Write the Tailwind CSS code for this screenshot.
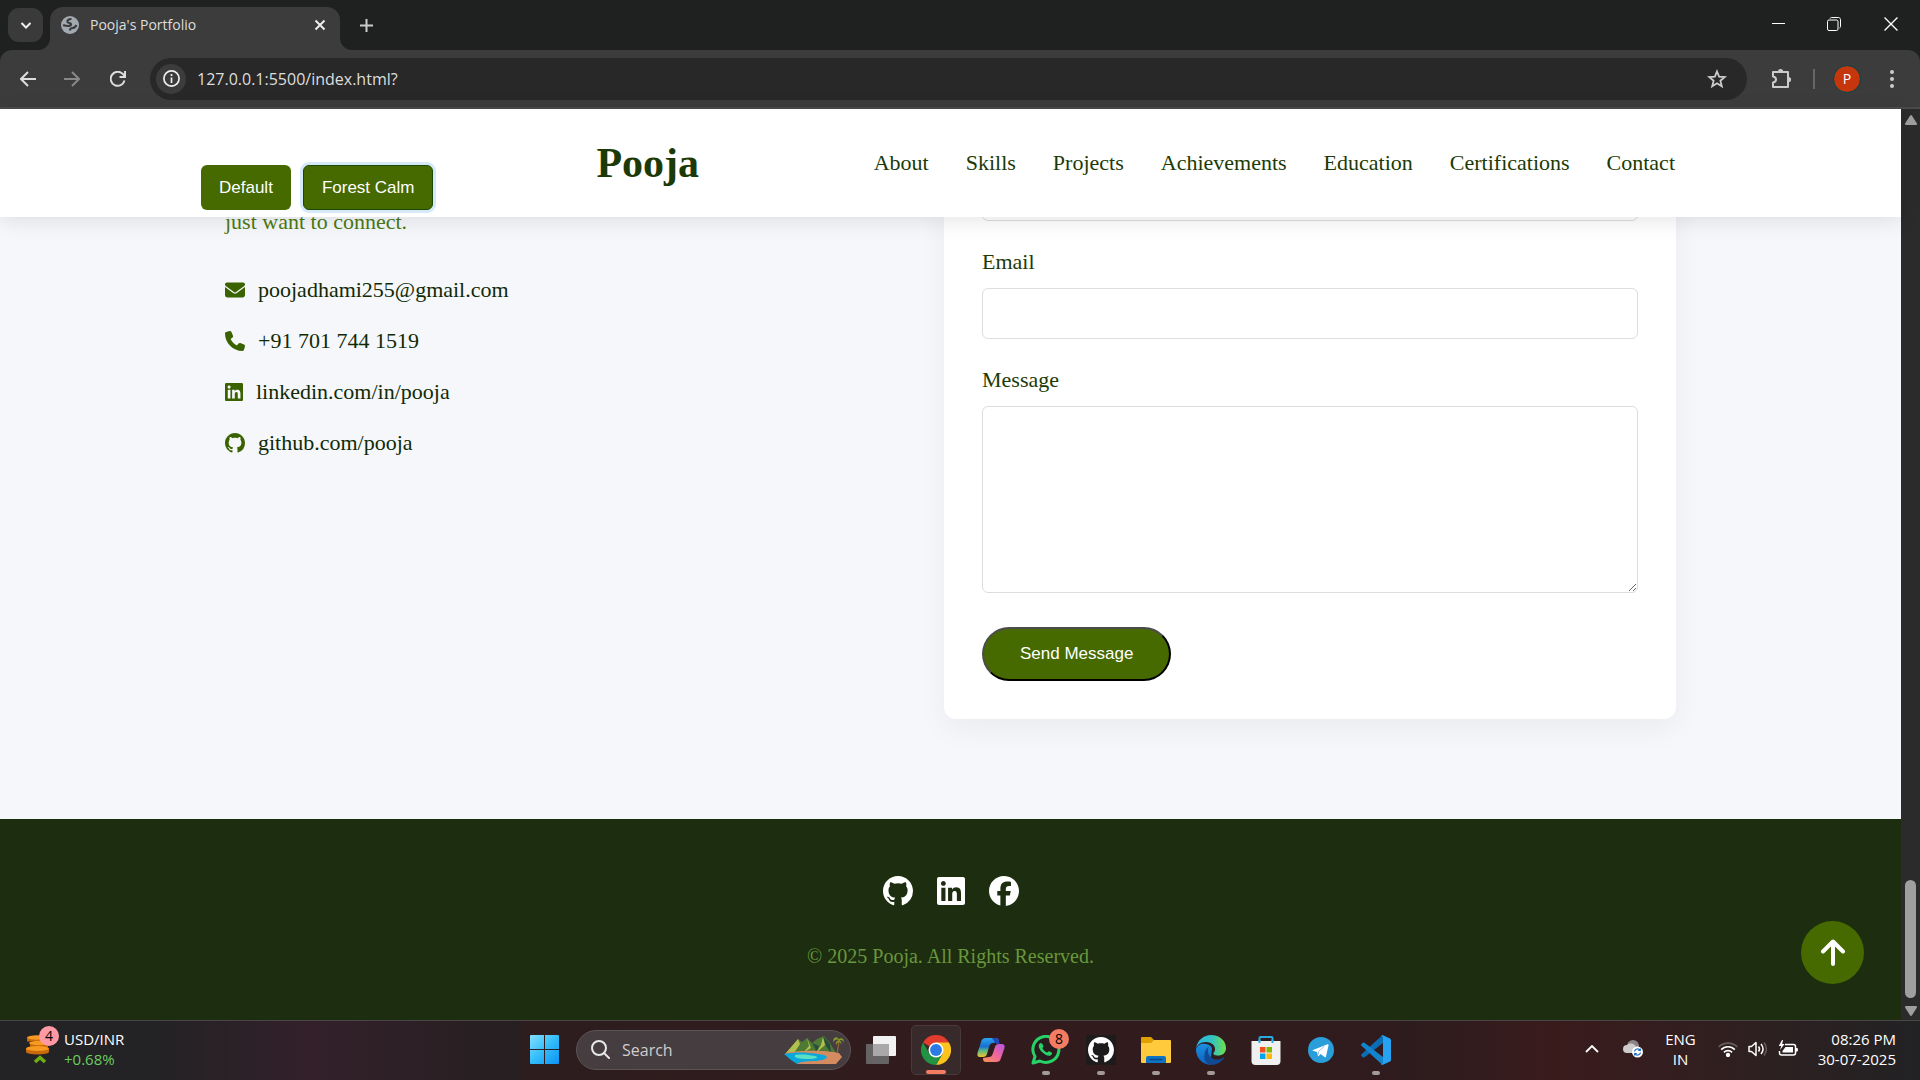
<!DOCTYPE html>
<html lang="en">
<head>
<meta charset="utf-8">
<title>Pooja's Portfolio</title>
<script src="https://cdn.jsdelivr.net/npm/@tailwindcss/browser@4"></script>
</head>
<body class="min-h-screen flex flex-col bg-[#1f2120] font-['Open_Sans','Noto_Sans',sans-serif]">

<svg class="hidden" aria-hidden="true">
  <symbol id="github" viewBox="0 0 16 16"><path d="M8 0C3.58 0 0 3.58 0 8c0 3.54 2.29 6.53 5.47 7.59.4.07.55-.17.55-.38 0-.19-.01-.82-.01-1.49-2.01.37-2.53-.49-2.69-.94-.09-.23-.48-.94-.82-1.13-.28-.15-.68-.52-.01-.53.63-.01 1.08.58 1.23.82.72 1.21 1.87.87 2.33.66.07-.52.28-.87.51-1.07-1.78-.2-3.64-.89-3.64-3.95 0-.87.31-1.59.82-2.15-.08-.2-.36-1.02.08-2.12 0 0 .67-.21 2.2.82.64-.18 1.32-.27 2-.27s1.36.09 2 .27c1.53-1.04 2.2-.82 2.2-.82.44 1.1.16 1.92.08 2.12.51.56.82 1.27.82 2.15 0 3.07-1.87 3.75-3.65 3.95.29.25.54.73.54 1.48 0 1.07-.01 1.93-.01 2.2 0 .21.15.46.55.38A8.01 8.01 0 0 0 16 8c0-4.42-3.58-8-8-8z"/></symbol>
  <symbol id="linkedin" viewBox="0 32 448 448"><path d="M416 32H31.9C14.3 32 0 46.5 0 64.3v383.4C0 465.5 14.3 480 31.9 480H416c17.6 0 32-14.5 32-32.3V64.3c0-17.8-14.4-32.3-32-32.3zM135.4 416H69V202.2h66.5V416zm-33.2-243c-21.3 0-38.5-17.3-38.5-38.5S80.9 96 102.2 96c21.2 0 38.5 17.3 38.5 38.5 0 21.3-17.2 38.5-38.5 38.5zm282.1 243h-66.4V312c0-24.8-.5-56.7-34.5-56.7-34.6 0-39.9 27-39.9 54.9V416h-66.4V202.2h63.7v29.2h.9c8.9-16.8 30.6-34.5 62.9-34.5 67.2 0 79.7 44.3 79.7 101.9V416z"/></symbol>
</svg>

<!-- Tab strip -->
<div class="h-[50px] flex items-start text-white">
  <button aria-label="Search tabs" class="mt-2 ml-2 w-[35px] h-[34px] rounded-[11px] bg-[#3a3a3a] flex items-center justify-center">
    <svg class="size-3" viewBox="0 0 12 12" fill="none" stroke="#eee" stroke-width="2"><path d="M1.5 4 6 8.5 10.500 4"/></svg>
  </button>
  <div class="relative mt-[7px] ml-[7px] w-[290px] h-[43px] rounded-t-[13px] bg-[#3c3c3c] flex items-center pl-[11px] pr-[10px]">
    <svg class="absolute bottom-0 -left-3 size-3" viewBox="0 0 12 12" fill="#3c3c3c"><path d="M12 0v12H0A12 12 0 0 0 12 0z"/></svg>
    <svg class="absolute bottom-0 -right-3 size-3" viewBox="0 0 12 12" fill="#3c3c3c"><path d="M0 0v12h12A12 12 0 0 1 0 0z"/></svg>
    <svg class="size-[18px] -mt-2" viewBox="0 0 18 18"><circle cx="9" cy="9" r="9" fill="#a3a9b1"/><path d="M10.500 3C7.500 3 6 4.500 6.500 6s3 .5 3.500 2-1.500 2-3 2S4 9 2 9.500M9 14.500c0-2 .5-2.500 2.500-2.500s3-1 4-3" fill="none" stroke="#3c3c3c" stroke-width="2.200"/></svg>
    <span class="ml-[11px] -mt-2 text-sm text-[#dedede]">Pooja's Portfolio</span>
    <button aria-label="Close tab" class="ml-auto -mt-2 size-5 flex items-center justify-center"><svg class="size-3" viewBox="0 0 12 12" stroke="#eee" stroke-width="2"><path d="m1.500 1.500 9 9m0-9-9 9"/></svg></button>
  </div>
  <button aria-label="New tab" class="ml-4 mt-[15px] size-5 flex items-center justify-center"><svg class="size-[13px]" viewBox="0 0 13 13" stroke="#ccc" stroke-width="2"><path d="M6.500 0v13M0 6.500h13"/></svg></button>
  <div class="ml-auto flex h-12 items-center">
    <button aria-label="Minimize" class="w-14 flex justify-center"><svg class="size-[13px]" viewBox="0 0 13 13" stroke="#fff"><path d="M0 5.500h13"/></svg></button>
    <button aria-label="Restore" class="w-14 flex justify-center"><svg class="size-[14px]" viewBox="0 0 14 14" fill="none" stroke="#fff"><rect x=".5" y="3" width="10.500" height="10.500" rx="1.500"/><path d="M3 1.500c.3-.7.8-1 1.500-1h7c1 0 2 1 2 2v7c0 .7-.3 1.200-1 1.500"/></svg></button>
    <button aria-label="Close" class="w-[58px] flex justify-center"><svg class="size-[14px]" viewBox="0 0 13 13" stroke="#fff" stroke-width="1.200"><path d="m.5.5 12 12m0-12-12 12"/></svg></button>
  </div>
</div>

<!-- Address bar -->
<div class="h-[59px] rounded-t-xl bg-[#3c3c3c] border-b-2 border-[#4b4b4b] flex items-center pl-[6px] pr-2">
  <button aria-label="Back" class="w-11 flex justify-center"><svg class="size-4" viewBox="0 0 16 16" fill="none" stroke="#ddd" stroke-width="2"><path d="M16 8H1.500M8 1 1 8l7 7"/></svg></button>
  <button aria-label="Forward" class="w-11 flex justify-center"><svg class="size-4" viewBox="0 0 16 16" fill="none" stroke="#888" stroke-width="2"><path d="M0 8h14.500M8 1l7 7-7 7"/></svg></button>
  <button aria-label="Reload" class="w-12 flex justify-center"><svg class="size-4" viewBox="0 0 16 16" fill="none" stroke="#ddd" stroke-width="2"><path d="M14.500 9.500A7 7 0 1 1 13 3.200L15 5.500M15 0v6H9.500"/></svg></button>
  <div class="ml-2 h-[42px] flex-1 rounded-full bg-[#282828] flex items-center pl-[6px] pr-5">
    <button aria-label="Site information" class="size-[30px] rounded-full bg-[#3c3c3c] flex items-center justify-center"><svg class="size-[17px]" viewBox="0 0 17 17" fill="none" stroke="#eee" stroke-width="1.700"><circle cx="8.500" cy="8.500" r="7.600"/><path d="M8.500 7.500V13M8.500 4v2"/></svg></button>
    <input aria-label="Address" value="127.0.0.1:5500/index.html?" class="ml-[11px] flex-1 bg-transparent text-base text-[#dedede] outline-none">
    <button aria-label="Bookmark"><svg class="size-5" viewBox="0 0 20 20" fill="none" stroke="#ccc" stroke-width="1.800"><path d="m10 2.500 2.100 5.200 5.600.4-4.300 3.600 1.400 5.500-4.800-3-4.800 3 1.400-5.500-4.300-3.600 5.600-.4z"/></svg></button>
  </div>
  <button aria-label="Extensions" class="ml-3 w-11 flex justify-center"><svg class="size-[22px]" viewBox="0 0 22 22"><path d="M3 4h15v15H3v-4.500c4-.5 4-5.500 0-6z" fill="none" stroke="#ccc" stroke-width="2" stroke-linejoin="round"/><path d="M8 3.500a2.600 2.600 0 0 1 5.200 0zM18.500 9a2.600 2.600 0 0 1 0 5.200z" fill="#ccc"/></svg></button>
  <span class="ml-[10px] w-[2px] h-5 bg-[#666]"></span>
  <button class="ml-[19px] size-[26px] rounded-full bg-[#c5360c] outline outline-[#144] text-sm text-white flex items-center justify-center">P</button>
  <button aria-label="Menu" class="ml-3 w-10 flex justify-center"><svg class="w-1 h-[18px]" viewBox="0 0 4 18" fill="#ccc"><circle cx="2" cy="2" r="2"/><circle cx="2" cy="9" r="2"/><circle cx="2" cy="16" r="2"/></svg></button>
</div>

<!-- Page -->
<div class="flex flex-1">
  <div class="relative flex flex-1 flex-col bg-[#f5f7fb] font-[Georgia,'Liberation_Serif',serif] text-[22px] leading-8 text-[#1c3a06]">
    <header class="relative z-10 flex h-[108px] items-center bg-white pl-[201px] pr-[226px] shadow-[0_4px_20px_rgba(0,0,0,0.1)]">
      <div class="flex gap-3 self-end pb-[7px] font-['Liberation_Sans',Arial,sans-serif] text-[17px] text-white">
        <button class="h-[45px] rounded-[6px] bg-[#466900] px-[18px]">Default</button>
        <button class="h-[45px] rounded-[6px] bg-[#466900] border border-[#1c4a06] px-[18px] ring-3 ring-[#d6e9f8]">Forest Calm</button>
      </div>
      <a href="#" class="ml-[163px] text-[42px] font-bold">Pooja</a>
      <nav class="ml-auto flex gap-[37px]">
        <a href="#about">About</a><a href="#skills">Skills</a><a href="#projects">Projects</a><a href="#achievements">Achievements</a><a href="#education">Education</a><a href="#certifications">Certifications</a><a href="#contact">Contact</a>
      </nav>
    </header>

    <main class="grid flex-1 grid-cols-[719fr_732fr] overflow-hidden px-[225px] pb-[100px]">
      <div>
        <p class="-mt-[11px] text-[#4a7a12]">just want to connect.</p>
        <ul class="mt-9 flex flex-col gap-[19px] text-[#102a04]">
          <li class="flex items-center gap-[13px]"><svg class="size-5 fill-[#3a6300]" viewBox="0 0 512 512"><path d="M48 64C21.500 64 0 85.500 0 112c0 15.100 7.100 29.300 19.200 38.400L236.800 313.600c11.400 8.500 27 8.500 38.400 0L492.800 150.400c12.100-9.100 19.200-23.300 19.200-38.400 0-26.500-21.500-48-48-48H48zM0 176v208c0 35.300 28.700 64 64 64h384c35.300 0 64-28.700 64-64V176L294.400 339.200c-22.800 17.100-54 17.100-76.800 0L0 176z"/></svg><a href="mailto:poojadhami255@gmail.com">poojadhami255@gmail.com</a></li>
          <li class="flex items-center gap-[13px]"><svg class="size-5 fill-[#3a6300]" viewBox="0 0 512 512"><path d="M164.900 24.600c-7.700-18.600-28-28.500-47.400-23.200l-88 24C12.100 30.200 0 46 0 64c0 247.400 200.600 448 448 448 18 0 33.800-12.100 38.600-29.500l24-88c5.300-19.400-4.600-39.700-23.200-47.400l-96-40c-16.300-6.800-35.200-2.100-46.300 11.600L304.700 368C234.300 334.700 177.300 277.700 144 207.300l49.300-40.300c13.700-11.200 18.400-30 11.600-46.300l-40-96z"/></svg><a href="tel:+917017441519">+91 701 744 1519</a></li>
          <li class="flex items-center gap-[13px]"><svg class="size-[18px] fill-[#3a6300]"><use href="#linkedin"/></svg><a href="#linkedin-profile">linkedin.com/in/pooja</a></li>
          <li class="flex items-center gap-[13px]"><svg class="size-5 fill-[#3a6300]"><use href="#github"/></svg><a href="#github-profile">github.com/pooja</a></li>
        </ul>
      </div>
      <form class="-mt-[85px] self-start rounded-xl bg-white p-[38px] shadow-[0_10px_30px_rgba(0,0,0,0.05)]">
        <input aria-label="Name" class="block h-[51px] w-full rounded-[6px] border border-[#ddd] px-4">
        <label for="email" class="mt-[25px] block">Email</label>
        <input id="email" type="email" class="mt-[10px] block h-[51px] w-full rounded-[6px] border border-[#ddd] px-4">
        <label for="message" class="mt-[25px] block">Message</label>
        <textarea id="message" class="mt-[10px] block h-[187px] w-full resize rounded-[6px] border border-[#ddd] px-4"></textarea>
        <button type="button" class="mt-[34px] block h-[54px] rounded-full border-2 border-t-[#4c4c4c] border-l-[#4c4c4c] border-r-black border-b-black bg-[#466900] px-9 font-['Liberation_Sans',Arial,sans-serif] text-[17px] text-white">Send Message</button>
      </form>
    </main>

    <footer class="bg-[#1c2d10] pt-14 pb-12 text-center">
      <div class="flex h-8 items-center justify-center gap-6 fill-white">
        <a href="#github-profile" aria-label="GitHub"><svg class="size-[30px]"><use href="#github"/></svg></a>
        <a href="#linkedin-profile" aria-label="LinkedIn"><svg class="size-7"><use href="#linkedin"/></svg></a>
        <a href="#facebook" aria-label="Facebook"><svg class="size-[30px]" viewBox="0 0 512 512"><path d="M512 256C512 114.600 397.400 0 256 0S0 114.600 0 256C0 376 82.700 476.800 194.200 504.500V334.200H141.400V256h52.800V222.300c0-87.100 39.400-127.500 125-127.500 16.200 0 44.200 3.200 55.700 6.400V172c-6-.6-16.500-1-29.600-1-42 0-58.200 15.900-58.200 57.200V256h83.600l-14.400 78.200H287V510.100C413.800 494.800 512 386.900 512 256z"/></svg></a>
      </div>
      <p class="mt-[33px] text-xl leading-8 text-[#6a963c]">© 2025 Pooja. All Rights Reserved.</p>
    </footer>
    <button aria-label="Back to top" class="absolute right-[37px] bottom-9 size-[63px] rounded-full bg-[#466900] flex items-center justify-center">
      <svg class="size-7" viewBox="0 0 28 28" fill="none" stroke="#fff" stroke-width="4" stroke-linecap="round" stroke-linejoin="round"><path d="M14 25V3M4 12.500 14 2.500l10 10"/></svg>
    </button>
  </div>
  <!-- Scrollbar -->
  <div class="flex w-[19px] flex-col items-center bg-[#2b2b2b] pt-[6px] pb-1">
    <svg class="w-3 h-[10px]" viewBox="0 0 12 10" fill="#9f9f9f"><path d="M5 .8a1.200 1.200 0 0 1 2 0l4.800 7.500c.4.800 0 1.700-.9 1.700H1.100C.2 10-.2 9.100.2 8.300z"/></svg>
    <div class="mt-auto mb-2 h-[118px] w-[11px] rounded-full bg-[#9f9f9f]"></div>
    <svg class="w-3 h-[10px] rotate-180" viewBox="0 0 12 10" fill="#9f9f9f"><path d="M5 .8a1.200 1.200 0 0 1 2 0l4.800 7.500c.4.800 0 1.700-.9 1.700H1.100C.2 10-.2 9.100.2 8.300z"/></svg>
  </div>
</div>

<!-- Taskbar -->
<div class="grid h-[60px] grid-cols-[1fr_auto_1fr] items-center border-t border-[#4a4547] bg-linear-to-r from-[#261f21] via-[#321b1d] to-[#2c1c1e] text-[15px] leading-5 text-white">
  <div class="flex h-full items-center bg-linear-to-r from-[#232225] from-30% via-[#33202a] via-60% to-[#261f21] pl-[26px] pb-1">
    <div class="relative">
      <svg class="w-[26px] h-7" viewBox="0 0 26 28"><g fill="#c8690a"><path d="M1 2.500h20v4H1zM4 8h18v4H4zM0 13.500h23v3.500H0z"/><ellipse cx="11.500" cy="17" rx="11.500" ry="2.500"/><ellipse cx="13" cy="12" rx="9" ry="2"/></g><g fill="#f79a22"><ellipse cx="11" cy="2.500" rx="10" ry="2.200"/><ellipse cx="13" cy="8" rx="10" ry="2.200"/><ellipse cx="11.500" cy="13.500" rx="11.500" ry="2.500"/></g><path d="m9 27 5-4.500 5 4.500" fill="none" stroke="#6fae10" stroke-width="3.500"/></svg>
      <span class="absolute -top-[9px] left-[13px] flex size-5 items-center justify-center rounded-full bg-[#ff99a4] text-sm text-black">4</span>
    </div>
    <div class="ml-3">
      <div>USD/INR</div>
      <div class="text-[#6ccb5f]">+0.68%</div>
    </div>
  </div>

  <div class="flex items-center gap-[5px] pb-[2px]">
    <button aria-label="Start" class="w-[50px] flex justify-center">
      <svg class="size-[29px]" viewBox="0 0 29 29"><defs><linearGradient id="w" x1="0" y1="0" x2="1" y2="1"><stop stop-color="#84e0ff"/><stop offset=".5" stop-color="#33bdfa"/><stop offset="1" stop-color="#0c93f5"/></linearGradient></defs><path fill="url(#w)" d="M0 1a1 1 0 0 1 1-1h13v14H0zM15 0h13a1 1 0 0 1 1 1v13H15zM0 15h14v14H1a1 1 0 0 1-1-1zM15 15h14v13a1 1 0 0 1-1 1H15z"/></svg>
    </button>
    <label class="ml-[2px] flex h-10 w-[275px] items-center rounded-full border border-[#5c5457] bg-[#453d40] pl-[14px] pr-[6px]">
      <svg class="size-[19px]" viewBox="0 0 19 19" fill="none" stroke="#e8e8e8" stroke-width="2" stroke-linecap="round"><circle cx="8" cy="8" r="7"/><path d="m13 13 5 5"/></svg>
      <input aria-label="Search" placeholder="Search" class="ml-3 min-w-0 flex-1 bg-transparent text-base placeholder-[#d0cccd] outline-none">
      <svg class="w-[60px] h-[30px]" viewBox="0 0 60 30"><path d="M2 18 14 4l4 3 5-4 5 5 5-4 7-3 6 7 6 10z" fill="#4e7a35"/><path d="m2 18 12-14 2 5-6 9zM23 3l2 8-6 7 8-5zM39 2l-2 8-5 8 9-8z" fill="#b3bf4f"/><path d="m39 1 3 10 5 7-1-9zM28 8l3 5 1 5 3-7z" fill="#284d3c"/><path d="M1 18c14-3 40-3 54 0l3 4-6 7H14L6 23z" fill="#d48b5f"/><path d="M0 19c12-2 20-2 34 0 10 1 12 4 4 6-7 2-20 0-25 4L7 25z" fill="#0aa6dc"/><path d="M11 20c8-1 14 0 20 1 5 1 1 3-7 3s-15-1-13-4z" fill="#5be0c4"/><path d="M53 18c1-5 2-8 2-14" stroke="#8c6239" stroke-width="1.500" fill="none"/><path d="M55 4c-4-4-6 0-6 3 2-2 3-3 6-2 3 0 4 0 5 3 0-4-2-6-5-4zm0 1c-3 1-4 3-3 5 1-2 2-3 3-3s2 1 2 3c1-3 0-4-2-5z" fill="#8a9a2a"/></svg>
    </label>
    <button aria-label="Task view" class="w-[50px] flex justify-center"><svg class="size-[30px]" viewBox="0 0 30 30"><rect y="9" width="23" height="20" rx="1" fill="#666364"/><rect x="7" y="1" width="23" height="20" rx="1" fill="#f2f2f2"/><path d="M7 9h16v12H8a1 1 0 0 1-1-1z" fill="#aaa8a8"/></svg></button>
    <button aria-label="Chrome" class="relative size-[50px] rounded-[5px] border border-[#483a3c] bg-[#38292b] flex items-center justify-center">
      <svg class="size-[30px]" viewBox="0 0 48 48"><path d="M24 24 3.200 12A24 24 0 0 1 44.800 12z" fill="#e33b2e"/><path d="M24 12h20.800A24 24 0 0 1 24 48l10.400-18z" fill="#fcc31e"/><path d="M13.600 30 3.200 12A24 24 0 0 0 24 48l10.400-18z" fill="#229342"/><circle cx="24" cy="24" r="12" fill="#fff"/><circle cx="24" cy="24" r="9.500" fill="#2c7be5"/></svg>
      <span class="absolute bottom-0 left-[14px] h-1 w-5 rounded-full bg-[#f47c62]"></span>
    </button>
    <button aria-label="Copilot" class="w-[50px] flex justify-center"><svg class="size-7" viewBox="0 0 28 28"><defs><linearGradient id="c1" x1="0" y1="0" x2="0" y2="1"><stop stop-color="#2aa5f2"/><stop offset=".45" stop-color="#1a6fd0"/><stop offset=".65" stop-color="#4fb78a"/><stop offset="1" stop-color="#f2c62e"/></linearGradient><linearGradient id="c2" x1="1" y1="0" x2="0" y2="1"><stop stop-color="#b455e8"/><stop offset=".5" stop-color="#f0669a"/><stop offset="1" stop-color="#fc9550"/></linearGradient></defs><path d="M9 2h10c2 0 3 2 3 4l-6 1c-2 0-3 1-4 4l-2 7c-.5 2-2 3-4 3H3c-2 0-3-1-2.500-4L4 6c1-3 2-4 5-4z" fill="url(#c1)"/><path d="M19 26H9c-2 0-3-1-3-4l6-1c2 0 3-1 4-4l2-6c.5-2 2-3 4-3h3c2 0 3 1 2.500 4L24 22c-1 3-2 4-5 4z" fill="url(#c2)"/><path d="M15 2h4c2 0 3 1 3.500 6H21c-2 0-3-1-4-3z" fill="#2347b8"/></svg></button>
    <button aria-label="WhatsApp" class="relative h-[50px] w-[50px] flex items-center justify-center">
      <svg class="size-[30px]" viewBox="0 0 30 30"><path d="M2 28 4 21.500A13 13 0 1 1 9 26z" fill="#2a1c1e" stroke="#25d366" stroke-width="3" stroke-linejoin="round"/><path d="M11 8.500c-.6-1-2-.7-2.700.4-1.500 2.600.6 6 3 8.400s6.200 4.500 8.500 3c1.200-.8 1.800-2 .8-2.700l-2.500-1.400c-.8-.3-1.500 1.400-2.200 1.200-1.800-.6-3.700-2.500-4.400-4.200-.2-.7 1.200-1.300 1-2.200z" fill="#25d366"/></svg>
      <span class="absolute top-1 right-[2px] flex size-5 items-center justify-center rounded-full bg-[#f47c62] text-sm text-black">8</span>
      <span class="absolute bottom-0 left-[21px] h-1 w-2 rounded-full bg-[#a39a9c]"></span>
    </button>
    <button aria-label="GitHub" class="relative h-[50px] w-[50px] flex items-center justify-center">
      <span class="flex size-[30px] items-center justify-center bg-[#1d1b1c]"><svg class="size-[26px] fill-white"><use href="#github"/></svg></span>
      <span class="absolute bottom-0 left-[21px] h-1 w-2 rounded-full bg-[#a39a9c]"></span>
    </button>
    <button aria-label="File Explorer" class="relative h-[50px] w-[50px] flex items-center justify-center">
      <svg class="size-[30px]" viewBox="0 0 30 30"><path d="M0 3a1 1 0 0 1 1-1h9l3 3h15v3H0z" fill="#e0a000"/><path d="M0 8h10l3-3h16a1 1 0 0 1 1 1v21a1 1 0 0 1-1 1H1a1 1 0 0 1-1-1z" fill="#ffcb3d"/><path d="M5 28v-5a2 2 0 0 1 2-2h16a2 2 0 0 1 2 2v5z" fill="#0f72c4"/><path d="M8.500 24.500h13" stroke="#0b4a86" stroke-width="1.500"/></svg>
      <span class="absolute bottom-0 left-[21px] h-1 w-2 rounded-full bg-[#a39a9c]"></span>
    </button>
    <button aria-label="Edge" class="relative h-[50px] w-[50px] flex items-center justify-center">
      <svg class="size-[30px]" viewBox="0 0 30 30"><defs><linearGradient id="e1"><stop stop-color="#2bb4e8"/><stop offset=".55" stop-color="#33c3c0"/><stop offset="1" stop-color="#6fe04a"/></linearGradient><linearGradient id="e2" x1="0" y1="0" x2="0" y2="1"><stop stop-color="#1c8fe0"/><stop offset="1" stop-color="#0b63c0"/></linearGradient></defs><path d="M0 14c2-5 6-6 10-5 4 .8 6 3 6 5L14 29.900A15 15 0 0 1 0 14z" fill="url(#e2)"/><path d="M13 11.500c-3.500 6 1 13 8 13 3 0 5-1 6.500-2 .5-.3.800.3.500.8C25 27.500 20 30 15 30 9.500 29 7.500 24 8.500 19c.5-3.500 2-6 4.500-7.500z" fill="#124a92"/><path d="M0 14C1 5 8 0 15 0c9 0 15 6 15 13 0 5-3.500 7.500-8 7.500-4 0-5-1.500-4.500-2.500 1-1.500 1.500-2 1.500-4 0-4-4-7-9-7-6 0-9 3-10 7z" fill="url(#e1)"/></svg>
      <span class="absolute bottom-0 left-[21px] h-1 w-2 rounded-full bg-[#a39a9c]"></span>
    </button>
    <button aria-label="Microsoft Store" class="w-[50px] flex justify-center"><svg class="size-[30px]" viewBox="0 0 30 30"><path d="M8.500 7V3a1 1 0 0 1 1-1h11a1 1 0 0 1 1 1v4" fill="none" stroke="#29abe2" stroke-width="2"/><path d="M.5 6h29v20a4 4 0 0 1-4 4h-21a4 4 0 0 1-4-4z" fill="#f0f0f0"/><path d="M9 12h5.500v5.500H9z" fill="#f25022"/><path d="M15.500 12H21v5.500h-5.500z" fill="#7fba00"/><path d="M9 18.500h5.500V24H9z" fill="#00a4ef"/><path d="M15.500 18.500H21V24h-5.500z" fill="#ffb900"/><path d="M8.500 5v3m13-3v3" stroke="#29abe2" stroke-width="2"/></svg></button>
    <button aria-label="Telegram" class="w-[50px] flex justify-center"><svg class="size-[26px]" viewBox="0 0 26 26"><circle cx="13" cy="13" r="13" fill="#2a9ddb"/><path d="M5 13 19.500 7.200c.7-.2 1.200.2 1 1.200L18 19.500c-.2.900-.8 1-1.500.6L12.700 17l-2 2c-.4.300-.7.200-.8-.3L9 15l-4-1.200c-.6-.2-.6-.5 0-.8z" fill="#fff"/><path d="m10.200 18 .4-3.500 6-5.500" stroke="#9cc8e4" fill="none"/></svg></button>
    <button aria-label="Visual Studio Code" class="relative h-[50px] w-[50px] flex items-center justify-center">
      <svg class="size-[30px]" viewBox="0 0 30 30"><path d="M22 8 3.500 22.200a1.500 1.500 0 0 1-1.800 0L.5 21c-.6-.6-.6-1.300 0-1.800L21 .5 24 3z" fill="#0b6db5"/><path d="M22 22 3.500 7.800a1.500 1.500 0 0 0-1.800 0L.5 9c-.6.6-.6 1.300 0 1.800L21 29.500l3-2.500z" fill="#1283cc"/><path d="m22 .3 7 3.200c.6.300 1 .9 1 1.600v19.800c0 .7-.4 1.300-1 1.600l-7 3.200c-.8.300-1.500 0-2-.5l2-1.200V2L20 .8c.5-.5 1.200-.8 2-.5z" fill="#27a1f2"/></svg>
      <span class="absolute bottom-0 left-[21px] h-1 w-2 rounded-full bg-[#a39a9c]"></span>
    </button>
  </div>

  <div class="flex h-full items-center justify-end bg-linear-to-r from-[#2c1c1e] via-[#3a1b1c] via-30% to-[#222224] pr-6 pb-1">
    <button aria-label="Hidden icons"><svg class="w-[14px] h-2" viewBox="0 0 14 8" fill="none" stroke="#fff" stroke-width="1.800"><path d="m1 7 6-6 6 6"/></svg></button>
    <svg class="ml-6 w-5 h-[18px]" viewBox="0 0 20 18"><circle cx="10" cy="6" r="6" fill="#8b8486"/><path d="M4 13a4 4 0 0 1 0-8c4-3 8-1 9 2a3 3 0 0 1 3 6z" fill="#cfcccd"/><circle cx="14.500" cy="12" r="5.500" fill="#fff"/><path d="M11.500 11.500a3 3 0 0 1 5.500-1.200M17.500 12.500a3 3 0 0 1-5.500 1.200M17.300 8.500v2h-2M11.700 15.500v-2h2" fill="none" stroke="#1769c0" stroke-width="1.200"/></svg>
    <div class="ml-[22px] text-center">ENG<br>IN</div>
    <svg class="ml-[22px] w-5 h-4" viewBox="0 0 20 16" fill="none" stroke="#fff" stroke-width="1.700"><path d="M.7 6a13 13 0 0 1 18.600 0" stroke="#6b5a5c"/><path d="M3.200 8.600a9.500 9.500 0 0 1 13.600 0M5.900 11.300a6 6 0 0 1 8.200 0"/><circle cx="10" cy="14" r="1.300" fill="#fff"/></svg>
    <svg class="ml-[10px] w-5 h-4" viewBox="0 0 20 16" fill="none" stroke="#fff" stroke-width="1.500" stroke-linejoin="round"><path d="M1 5.500v5h2.500L8 14.500v-13L3.500 5.500zM10.500 5.500c1.200 1.500 1.200 3.500 0 5M13 3c2.500 3 2.500 7 0 10"/><path d="M16 1.500c3 4 3 9 0 13" stroke="#6b5a5c"/></svg>
    <svg class="ml-[10px] w-5 h-[17px]" viewBox="0 0 20 17"><path d="M7 4.500h8.500a2 2 0 0 1 2 2V13a2 2 0 0 1-2 2h-12a2 2 0 0 1-2-2v-2" fill="none" stroke="#fff" stroke-width="1.500"/><path d="M7.500 7H15v5.500H4.500V11zM18 8h1.200c1 0 1 3.500 0 3.500H18zM4 0 .8 6h2.400L2 10l4.500-6H4.200L5 0z" fill="#fff"/></svg>
    <div class="ml-5 text-right">08:26 PM<br>30-07-2025</div>
  </div>
</div>
</body>
</html>
